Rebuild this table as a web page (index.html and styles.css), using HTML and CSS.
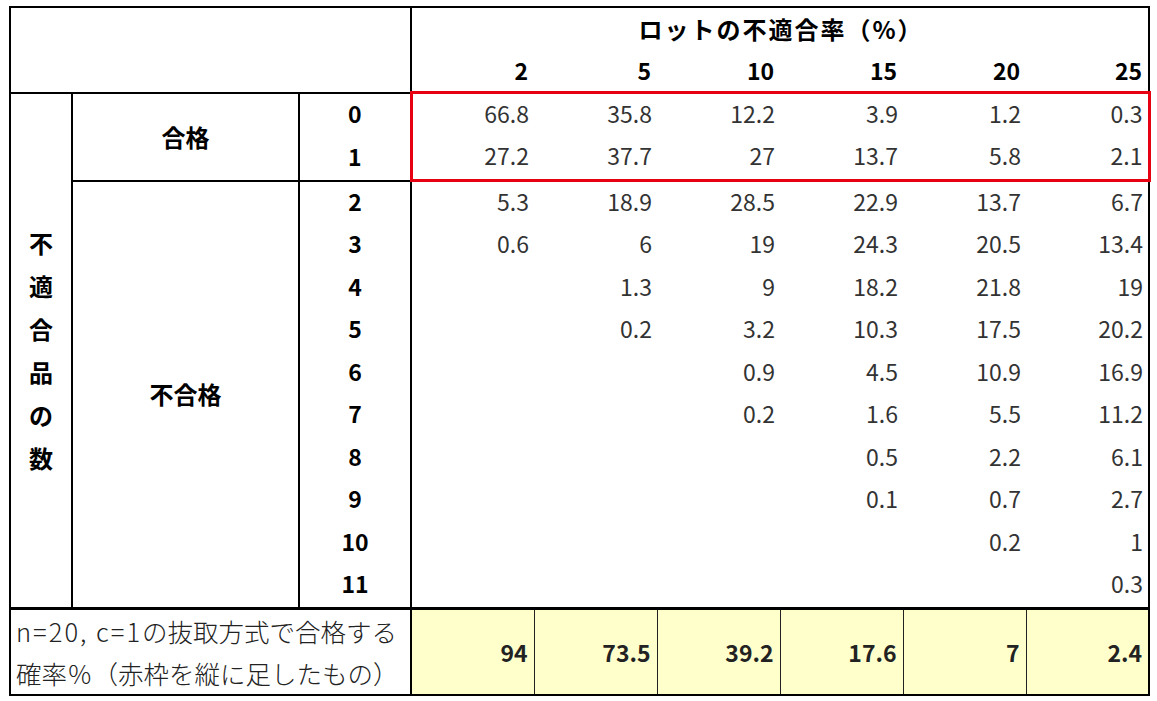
FILE: index.html
```html
<!DOCTYPE html>
<html lang="ja">
<head>
<meta charset="utf-8">
<title>OC表</title>
<link rel="stylesheet" href="styles.css">
</head>
<body>
<table class="sheet">
  <colgroup>
    <col class="c-a"><col class="c-b"><col class="c-c">
    <col class="c-d"><col class="c-d"><col class="c-d"><col class="c-d"><col class="c-d"><col class="c-d">
  </colgroup>
  <tr class="hrow">
    <td class="corner" colspan="3" rowspan="2"></td>
    <th class="title" colspan="6">ロットの不適合率（%）</th>
  </tr>
  <tr class="hrow">
    <th class="pct">2</th><th class="pct">5</th><th class="pct">10</th><th class="pct">15</th><th class="pct">20</th><th class="pct">25</th>
  </tr>
  <tr class="drow">
    <td class="vlabel" rowspan="12">不<br>適<br>合<br>品<br>の<br>数</td>
    <td class="group pass" rowspan="2">合格</td>
    <td class="k">0</td>
    <td class="v rt rl">66.8</td><td class="v rt">35.8</td><td class="v rt">12.2</td><td class="v rt">3.9</td><td class="v rt">1.2</td><td class="v rt rr">0.3</td>
  </tr>
  <tr class="drow">
    <td class="k kend">1</td>
    <td class="v rb rl">27.2</td><td class="v rb">37.7</td><td class="v rb">27</td><td class="v rb">13.7</td><td class="v rb">5.8</td><td class="v rb rr">2.1</td>
  </tr>
  <tr class="drow">
    <td class="group" rowspan="10">不合格</td>
    <td class="k">2</td>
    <td class="v">5.3</td><td class="v">18.9</td><td class="v">28.5</td><td class="v">22.9</td><td class="v">13.7</td><td class="v">6.7</td>
  </tr>
  <tr class="drow">
    <td class="k">3</td>
    <td class="v">0.6</td><td class="v">6</td><td class="v">19</td><td class="v">24.3</td><td class="v">20.5</td><td class="v">13.4</td>
  </tr>
  <tr class="drow">
    <td class="k">4</td>
    <td class="v"></td><td class="v">1.3</td><td class="v">9</td><td class="v">18.2</td><td class="v">21.8</td><td class="v">19</td>
  </tr>
  <tr class="drow">
    <td class="k">5</td>
    <td class="v"></td><td class="v">0.2</td><td class="v">3.2</td><td class="v">10.3</td><td class="v">17.5</td><td class="v">20.2</td>
  </tr>
  <tr class="drow">
    <td class="k">6</td>
    <td class="v"></td><td class="v"></td><td class="v">0.9</td><td class="v">4.5</td><td class="v">10.9</td><td class="v">16.9</td>
  </tr>
  <tr class="drow">
    <td class="k">7</td>
    <td class="v"></td><td class="v"></td><td class="v">0.2</td><td class="v">1.6</td><td class="v">5.5</td><td class="v">11.2</td>
  </tr>
  <tr class="drow">
    <td class="k">8</td>
    <td class="v"></td><td class="v"></td><td class="v"></td><td class="v">0.5</td><td class="v">2.2</td><td class="v">6.1</td>
  </tr>
  <tr class="drow">
    <td class="k">9</td>
    <td class="v"></td><td class="v"></td><td class="v"></td><td class="v">0.1</td><td class="v">0.7</td><td class="v">2.7</td>
  </tr>
  <tr class="drow">
    <td class="k">10</td>
    <td class="v"></td><td class="v"></td><td class="v"></td><td class="v"></td><td class="v">0.2</td><td class="v">1</td>
  </tr>
  <tr class="drow">
    <td class="k">11</td>
    <td class="v"></td><td class="v"></td><td class="v"></td><td class="v"></td><td class="v"></td><td class="v">0.3</td>
  </tr>
  <tr class="foot">
    <td class="flabel" colspan="3"><span class="lat">n=20, c=1</span>の抜取方式で合格する<br>確率％（赤枠を縦に足したもの）</td>
    <td class="fv first">94</td><td class="fv">73.5</td><td class="fv">39.2</td><td class="fv">17.6</td><td class="fv">7</td><td class="fv">2.4</td>
  </tr>
</table>
</body>
</html>
```
FILE: styles.css
```css
html, body {
  margin: 0;
  padding: 0;
  background: #ffffff;
}

body {
  font-family: "Noto Sans CJK JP", "Noto Sans", sans-serif;
  font-size: 23px;
  color: #000;
}

.sheet {
  margin: 6px 0 0 9px;
  border-collapse: collapse;
  table-layout: fixed;
  width: 1139px;
  border: 2px solid #000;
}

.c-a { width: 62px; }
.c-b { width: 227px; }
.c-c { width: 112px; }
.c-d { width: 123px; }

.sheet td, .sheet th {
  padding: 0;
  line-height: 1;
  vertical-align: middle;
}

.hrow td, .hrow th {
  height: 41.5px;
}

.drow td {
  height: 42.5px;
}

.drow .k, .drow .v {
  padding-bottom: 4px;
  height: 38.5px;
}

.corner {
  border-right: 2px solid #000;
  border-bottom: 2px solid #000;
}

.title {
  font-size: 24px;
  font-weight: 700;
  letter-spacing: 2px;
  text-align: center;
  padding-left: 2px !important;
}

.pct {
  font-weight: 700;
  text-align: right;
  padding-right: 6px !important;
  border-bottom: 2px solid #000;
}

.vlabel {
  font-size: 24px;
  font-weight: 700;
  text-align: center;
  line-height: 43px !important;
  border-right: 2px solid #000;
}

.group {
  font-size: 24px;
  font-weight: 700;
  text-align: center;
  border-right: 2px solid #000;
}

.group.pass {
  border-bottom: 2px solid #000;
}

.k {
  font-weight: 700;
  text-align: center;
  border-right: 2px solid #000;
}

.k.kend {
  border-bottom: 2px solid #000;
}

.v {
  text-align: right;
  padding-right: 5px !important;
  color: #333;
  font-weight: 400;
}

.rt { border-top: 3px solid #e60012; }
.rb { border-bottom: 3px solid #e60012; }
.rl { border-left: 3px solid #e60012; }
.rr { border-right: 3px solid #e60012; }

.foot td {
  height: 80px;
  border-top: 3px solid #000;
}

.flabel {
  font-size: 25.5px;
  text-align: left;
  padding-left: 5px !important;
  line-height: 42px !important;
  color: #222;
  font-weight: 300;
  white-space: nowrap;
}

.lat {
  letter-spacing: 2px;
}

.fv {
  background: #ffffcc;
  text-align: right;
  padding-right: 6px !important;
  font-weight: 700;
  color: #222;
  border-left: 1px solid #222;
}

.fv.first {
  border-left: 2px solid #000;
}
```
